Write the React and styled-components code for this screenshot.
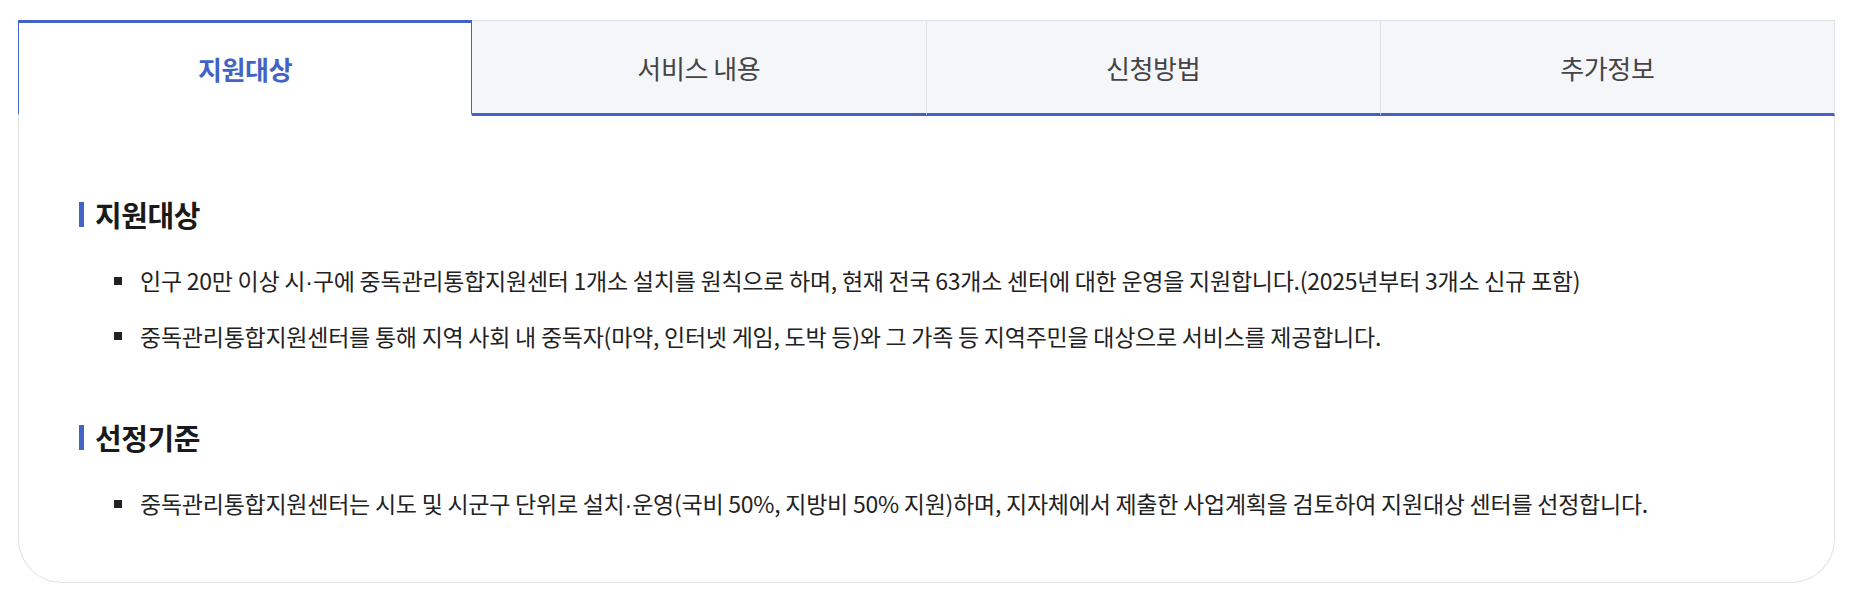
import React, { useState } from "react";
import styled, { createGlobalStyle, css } from "styled-components";

const BLUE = "#4263c6";

const GlobalStyle = createGlobalStyle`
  * { box-sizing: border-box; }
  html, body { margin: 0; padding: 0; background: #ffffff; }
  body {
    font-family: "Noto Sans CJK KR", "Noto Sans", sans-serif;
    color: #333;
  }
`;

const Page = styled.div`
  padding: 20px 18px 20px 18px;
`;

const TabList = styled.div`
  display: grid;
  grid-template-columns: repeat(4, 1fr);
`;

const Tab = styled.button`
  height: 96px;
  margin: 0;
  padding: 0;
  font-family: inherit;
  font-size: 26px;
  letter-spacing: -0.4px;
  cursor: pointer;
  display: flex;
  align-items: center;
  justify-content: center;
  background: #f4f6fa;
  color: #444;
  font-weight: 400;
  border: none;
  border-top: 1px solid #dfe2e8;
  border-right: 1px solid #dfe2e8;
  border-bottom: 3px solid ${BLUE};

  ${(p) =>
    p.$active &&
    css`
      background: #ffffff;
      color: ${BLUE};
      font-weight: 700;
      border-top: 3px solid ${BLUE};
      border-left: 1px solid ${BLUE};
      border-right: 1px solid ${BLUE};
      border-bottom: 3px solid transparent;
    `}
`;

const Panel = styled.div`
  border: 1px solid #e2e2e2;
  border-top: none;
  border-radius: 0 0 44px 44px;
  padding: 80px 60px 61px 60px;
  display: flex;
  flex-direction: column;
  gap: 67px;
`;

const Section = styled.section`
  display: flex;
  flex-direction: column;
  gap: 32px;
`;

const Heading = styled.h3`
  margin: 0;
  display: flex;
  align-items: center;
  font-size: 29px;
  line-height: 36px;
  font-weight: 700;
  color: #1a1a1a;
  letter-spacing: -0.4px;

  &::before {
    content: "";
    width: 5px;
    height: 25px;
    background: ${BLUE};
    margin-right: 11px;
    flex-shrink: 0;
  }
`;

const List = styled.ul`
  margin: 0;
  padding: 0;
  list-style: none;
  display: flex;
  flex-direction: column;
  gap: 22px;
`;

const Item = styled.li`
  display: flex;
  align-items: center;
  font-size: 23px;
  line-height: 32px;
  color: #222;
  letter-spacing: -0.25px;
  white-space: nowrap;

  &::before {
    content: "";
    width: 8px;
    height: 8px;
    background: #222;
    margin-left: 35px;
    margin-right: 18px;
    flex-shrink: 0;
  }
`;

const ItemText = styled.span``;

const Dot = styled.span`
  font-family: "Liberation Sans", sans-serif;
  letter-spacing: 0;
`;

const tabs = ["지원대상", "서비스 내용", "신청방법", "추가정보"];

const sections = [
  {
    title: "지원대상",
    items: [
      "인구 20만 이상 시·구에 중독관리통합지원센터 1개소 설치를 원칙으로 하며, 현재 전국 63개소 센터에 대한 운영을 지원합니다.(2025년부터 3개소 신규 포함)",
      "중독관리통합지원센터를 통해 지역 사회 내 중독자(마약, 인터넷 게임, 도박 등)와 그 가족 등 지역주민을 대상으로 서비스를 제공합니다.",
    ],
  },
  {
    title: "선정기준",
    items: [
      "중독관리통합지원센터는 시도 및 시군구 단위로 설치·운영(국비 50%, 지방비 50% 지원)하며, 지자체에서 제출한 사업계획을 검토하여 지원대상 센터를 선정합니다.",
    ],
  },
];

function renderText(text) {
  const parts = text.split("·");
  return parts.map((p, i) => (
    <React.Fragment key={i}>
      {p}
      {i < parts.length - 1 && <Dot>·</Dot>}
    </React.Fragment>
  ));
}

export default function App() {
  const [active, setActive] = useState(0);
  return (
    <Page>
      <GlobalStyle />
      <TabList role="tablist">
        {tabs.map((t, i) => (
          <Tab
            key={t}
            role="tab"
            $active={i === active}
            aria-selected={i === active}
            onClick={() => setActive(i)}
          >
            {t}
          </Tab>
        ))}
      </TabList>
      <Panel>
        {sections.map((s) => (
          <Section key={s.title}>
            <Heading>{s.title}</Heading>
            <List>
              {s.items.map((it) => (
                <Item key={it}>
                  <ItemText>{renderText(it)}</ItemText>
                </Item>
              ))}
            </List>
          </Section>
        ))}
      </Panel>
    </Page>
  );
}
